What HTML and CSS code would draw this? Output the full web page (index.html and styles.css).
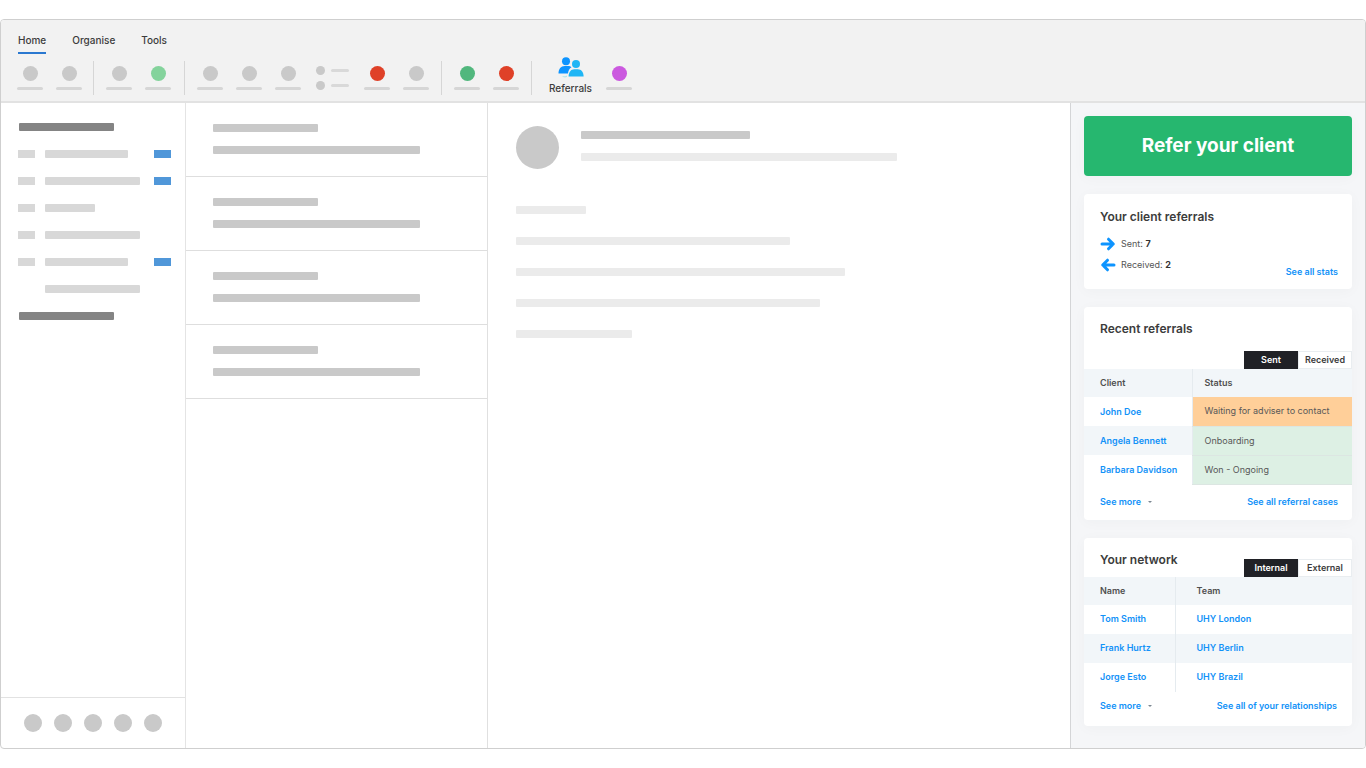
FILE: index.html
```html
<!DOCTYPE html>
<html lang="en">
<head>
<meta charset="utf-8">
<meta name="viewport" content="width=device-width, initial-scale=1">
<title>Referrals</title>
<link rel="stylesheet" href="styles.css">
</head>
<body>
<div class="window">
  <header class="ribbon">
    <nav class="menu" aria-label="Ribbon">
      <a class="menu-link active" href="#home">Home</a>
      <a class="menu-link" href="#organise">Organise</a>
      <a class="menu-link" href="#tools">Tools</a>
    </nav>
    <div class="tools">
      <div class="tool-group">
        <button class="tool" aria-label="New"></button>
        <button class="tool" aria-label="Delete"></button>
      </div>
      <div class="tool-group filing">
        <button class="tool" aria-label="Archive"></button>
        <button class="tool mint" aria-label="Move"></button>
      </div>
      <div class="tool-group">
        <button class="tool" aria-label="Reply"></button>
        <button class="tool" aria-label="Reply all"></button>
        <button class="tool" aria-label="Forward"></button>
        <button class="tool-list" aria-label="Options"><span class="tool-line"></span><span class="tool-line"></span></button>
        <button class="tool red" aria-label="Flag"></button>
        <button class="tool" aria-label="Rules"></button>
      </div>
      <div class="tool-group">
        <button class="tool green" aria-label="Read"></button>
        <button class="tool red" aria-label="Junk"></button>
      </div>
      <div class="tool-group addins">
        <button class="referrals">
          <svg class="people" viewBox="0 0 26 21" aria-hidden="true">
            <circle cx="8" cy="4.3" r="4" fill="#0d94ff"/>
            <path d="M.5 16.6c0-4.6 2.3-7.6 6.2-7.6h3.2c1.6 0 2.8.5 3.6 1.3-2 1.2-3.2 3.2-3.5 6.3z" fill="#0d94ff"/>
            <circle cx="18" cy="7.1" r="4" fill="#1fb6f5"/>
            <path d="M10.6 19.6c0-4.6 2.4-7.3 5.8-7.3h3.4c3.4 0 5.8 2.7 5.8 7.3z" fill="#1fb6f5"/>
            <path d="M4 19.4h3.6l1-.9v1.4q-3 .8-4.6-.5z" fill="#8adfe8"/>
          </svg>
          <span>Referrals</span>
        </button>
        <button class="tool purple" aria-label="Add-in"></button>
      </div>
    </div>
  </header>

  <main class="panes">
    <nav class="folders" aria-label="Folders">
      <ul class="folder-list">
        <li class="folder heading"><span class="bar w95"></span></li>
        <li class="folder"><span class="chip"></span><span class="bar w83"></span><span class="chip count"></span></li>
        <li class="folder"><span class="chip"></span><span class="bar w95"></span><span class="chip count"></span></li>
        <li class="folder"><span class="chip"></span><span class="bar w50"></span></li>
        <li class="folder"><span class="chip"></span><span class="bar w95"></span></li>
        <li class="folder"><span class="chip"></span><span class="bar w83"></span><span class="chip count"></span></li>
        <li class="folder"><span class="chip blank"></span><span class="bar w95"></span></li>
        <li class="folder heading"><span class="bar w95"></span></li>
      </ul>
      <div class="switcher">
        <button class="dot" aria-label="Mail"></button>
        <button class="dot" aria-label="Calendar"></button>
        <button class="dot" aria-label="People"></button>
        <button class="dot" aria-label="Tasks"></button>
        <button class="dot" aria-label="More"></button>
      </div>
    </nav>

    <ul class="messages">
      <li class="message"><span class="bar short"></span><span class="bar long"></span></li>
      <li class="message"><span class="bar short"></span><span class="bar long"></span></li>
      <li class="message"><span class="bar short"></span><span class="bar long"></span></li>
      <li class="message"><span class="bar short"></span><span class="bar long"></span></li>
    </ul>

    <article class="reader">
      <div class="sender">
        <span class="avatar"></span>
        <div class="sender-lines"><span class="bar name"></span><span class="bar pale subject"></span></div>
      </div>
      <div class="body-lines">
        <span class="bar pale w70"></span>
        <span class="bar pale w274"></span>
        <span class="bar pale w329"></span>
        <span class="bar pale w304"></span>
        <span class="bar pale w116"></span>
      </div>
    </article>

    <aside class="sidebar">
      <button class="refer">Refer your client</button>

      <section class="card stats">
        <h2 class="title">Your client referrals</h2>
        <div class="stats-row">
          <ul class="totals">
            <li><svg class="arrow" viewBox="0 0 16 14" aria-hidden="true"><path d="M2 7h11M8.500 2.200 13.300 7l-4.800 4.800"/></svg><span>Sent: <strong>7</strong></span></li>
            <li><svg class="arrow" viewBox="0 0 16 14" aria-hidden="true"><path d="M14 7H3M7.500 2.200 2.700 7l4.800 4.800"/></svg><span>Received: <strong>2</strong></span></li>
          </ul>
          <a class="link" href="#stats">See all stats</a>
        </div>
      </section>

      <section class="card">
        <div class="card-head tall">
          <h2 class="title">Recent referrals</h2>
          <div class="tabs"><button class="tab on">Sent</button><button class="tab">Received</button></div>
        </div>
        <table class="grid recent">
          <thead><tr><th>Client</th><th>Status</th></tr></thead>
          <tbody>
            <tr><td><a class="link" href="#john">John Doe</a></td><td class="waiting">Waiting for adviser to contact</td></tr>
            <tr><td><a class="link" href="#angela">Angela Bennett</a></td><td class="good">Onboarding</td></tr>
            <tr><td><a class="link" href="#barbara">Barbara Davidson</a></td><td class="good">Won - Ongoing</td></tr>
          </tbody>
        </table>
        <div class="card-foot tall">
          <button class="link more">See more <span class="caret"></span></button>
          <a class="link" href="#cases">See all referral cases</a>
        </div>
      </section>

      <section class="card">
        <div class="card-head">
          <h2 class="title">Your network</h2>
          <div class="tabs"><button class="tab on">Internal</button><button class="tab">External</button></div>
        </div>
        <table class="grid network">
          <thead><tr><th>Name</th><th>Team</th></tr></thead>
          <tbody>
            <tr><td><a class="link" href="#tom">Tom Smith</a></td><td><a class="link" href="#london">UHY London</a></td></tr>
            <tr><td><a class="link" href="#frank">Frank Hurtz</a></td><td><a class="link" href="#berlin">UHY Berlin</a></td></tr>
            <tr><td><a class="link" href="#jorge">Jorge Esto</a></td><td><a class="link" href="#brazil">UHY Brazil</a></td></tr>
          </tbody>
        </table>
        <div class="card-foot">
          <button class="link more">See more <span class="caret"></span></button>
          <a class="link" href="#relationships">See all of your relationships</a>
        </div>
      </section>
    </aside>
  </main>
</div>
</body>
</html>
```

FILE: styles.css
```css
* { box-sizing: border-box; }

body {
  margin: 0;
  padding: 19px 0;
  background: #fff;
  color: #3c3c3c;
  font: 9px/14px Inter, "Open Sans", sans-serif;
}

button {
  margin: 0;
  padding: 0;
  border: 0;
  background: none;
  color: inherit;
  font: inherit;
  cursor: pointer;
}

ul { margin: 0; padding: 0; list-style: none; }
a { text-decoration: none; }

.window {
  display: flex;
  flex-direction: column;
  min-height: calc(100vh - 38px);
  border: 1px solid #cfcfcf;
  border-radius: 4px;
  overflow: hidden;
}

/* Ribbon */
.ribbon {
  background: #f2f2f2;
  border-bottom: 2px solid #e2e2e2;
  padding: 13px 16px 6px;
}

.menu { display: flex; gap: 26px; padding-left: 1px; }
.menu-link {
  padding-bottom: 4px;
  border-bottom: 2px solid transparent;
  color: #3c3c3c;
  font-size: 10px;
  font-weight: 500;
  line-height: 15px;
}
.menu-link.active { border-color: #2a78d0; }

.tools { display: flex; align-items: flex-end; height: 41px; }
.tool-group {
  display: flex;
  align-items: center;
  gap: 13px;
  height: 34px;
  padding: 0 12px;
  border-right: 1px solid #d6d6d6;
}
.tool-group:first-child { padding: 0 11px 0 0; }
.tool-group.filing { padding-right: 13px; }
.tool-group.addins { align-items: flex-end; padding-left: 16px; border-right: 0; }

.tool {
  display: flex;
  flex-direction: column;
  align-items: center;
  gap: 6px;
  width: 26px;
  height: 24px;
}
.tool::before { content: ""; width: 15px; height: 15px; border-radius: 50%; background: #c9c9c9; }
.tool::after { content: ""; width: 26px; height: 3px; border-radius: 2px; background: #d6d6d6; }
.tool.mint::before { background: #84d39c; }
.tool.green::before { background: #51b77d; }
.tool.red::before { background: #df4128; }
.tool.purple::before { background: #cb59df; }
.addins .tool { margin-bottom: 5px; }

.tool-list { display: flex; flex-direction: column; gap: 6px; margin: 0 2px; }
.tool-line { display: flex; align-items: center; gap: 6px; }
.tool-line::before { content: ""; width: 9px; height: 9px; border-radius: 50%; background: #c9c9c9; }
.tool-line::after { content: ""; width: 18px; height: 3px; border-radius: 2px; background: #d9d9d9; }

.referrals {
  display: flex;
  flex-direction: column;
  align-items: center;
  gap: 3px;
  width: 45px;
  font-size: 10px;
  font-weight: 500;
}
.people { width: 26px; height: 21px; }

/* Panes */
.panes {
  flex: 1;
  display: grid;
  grid-template-columns: 185px 302px minmax(0, 1fr) 295px;
}

.bar { display: block; max-width: 100%; height: 8px; border-radius: 1px; background: #c9c9c9; }
.bar.pale { background: #ebebeb; }

.folders { display: flex; flex-direction: column; border-right: 1px solid #e4e4e4; }
.folder-list { flex: 1; padding: 10px 14px 10px 17px; }
.folder { display: flex; align-items: center; gap: 10px; height: 27px; }
.folder .bar { background: #d8d8d8; }
.folder.heading { padding-left: 1px; }
.folder.heading .bar { background: #848484; }
.chip { width: 17px; height: 8px; background: #d8d8d8; }
.chip.blank { background: none; }
.chip.count { margin-left: auto; background: #5097d9; }
.w50 { width: 50px; }
.w70 { width: 70px; }
.w83 { width: 83px; }
.w95 { width: 95px; }
.w116 { width: 116px; }
.w274 { width: 274px; }
.w304 { width: 304px; }
.w329 { width: 329px; }

.switcher {
  display: flex;
  align-items: center;
  gap: 12px;
  height: 51px;
  padding-left: 23px;
  border-top: 1px solid #e2e2e2;
}
.dot { width: 18px; height: 18px; border-radius: 50%; background: #c9c9c9; }

.messages { border-right: 1px solid #e0e0e0; }
.message {
  display: flex;
  flex-direction: column;
  gap: 14px;
  padding: 21px 27px 22px;
  border-bottom: 1px solid #dedede;
}
.bar.short { width: 105px; }
.bar.long { width: 207px; }

.reader { padding: 23px 28px; }
.sender { display: flex; align-items: flex-start; gap: 22px; }
.avatar { width: 43px; height: 43px; border-radius: 50%; background: #c9c9c9; }
.sender-lines { display: grid; gap: 14px; padding-top: 5px; }
.bar.name { width: 169px; }
.bar.subject { width: 316px; }
.body-lines { display: grid; gap: 23px; padding-top: 37px; }

/* Sidebar */
.sidebar {
  display: flex;
  flex-direction: column;
  gap: 18px;
  padding: 13px;
  border-left: 1px solid #d4d5d7;
  background: #f5f6f8;
}

.refer {
  height: 60px;
  border-radius: 4px;
  background: #26b76f;
  box-shadow: 0 2px 14px rgba(40, 50, 70, 0.03);
  color: #fff;
  font-size: 19px;
  font-weight: 700;
}

.card { border-radius: 4px; background: #fff; box-shadow: 0 2px 14px rgba(40, 50, 70, 0.03); overflow: hidden; }
.title { margin: 0; font-size: 12px; font-weight: 600; line-height: 16px; }
.link { color: #1292f8; font-weight: 600; }

.stats { padding: 15px 14px 10px 16px; }
.stats-row { display: flex; justify-content: space-between; align-items: flex-end; padding-top: 12px; }
.totals { display: grid; gap: 7px; padding-bottom: 7px; color: #555; }
.totals li { display: flex; align-items: center; gap: 5px; }
.totals strong { color: #333; }
.arrow { width: 16px; height: 14px; fill: none; stroke: #0d94ff; stroke-width: 3; stroke-linecap: round; stroke-linejoin: round; }

.card-head { display: flex; justify-content: space-between; height: 39px; padding: 14px 0 0 16px; }
.card-head.tall { height: 62px; }
.tabs { display: flex; align-self: flex-end; width: 108px; }
.tab { flex: 1; height: 18px; border: 1px solid #e9edf0; font-weight: 600; }
.tab.on { border-color: #202126; background: #202126; color: #fff; }

.grid { width: 100%; border-collapse: collapse; table-layout: fixed; }
.grid tr { height: 29px; }
.grid thead tr { height: 28px; }
.grid th, .grid td { padding: 0 0 0 16px; text-align: left; white-space: nowrap; }
.grid th { background: #f2f6f9; color: #505050; font-weight: 600; }
.grid td { color: #585858; }
.grid tbody tr:nth-child(even) { background: #f2f6f9; }
.grid th + th, .grid td + td { border-left: 1px solid #e5ebef; }
.recent th:first-child { width: 108px; }
.recent th + th, .recent td + td { padding-left: 12px; }
.recent tbody td + td { border-bottom: 1px solid #dce6e2; }
.network th:first-child { width: 91px; }
.network th + th, .network td + td { padding-left: 21px; }
.waiting { background: #ffcf99; }
.good { background: #ddf0e4; }

.card-foot { display: flex; justify-content: space-between; align-items: center; height: 34px; padding: 0 15px 6px 16px; }
.card-foot.tall { height: 35px; padding: 0 14px 0 16px; }
.more { display: flex; align-items: center; gap: 7px; }
.caret { border: 2px solid transparent; border-top-color: #7c8792; border-bottom: 0; }
```
